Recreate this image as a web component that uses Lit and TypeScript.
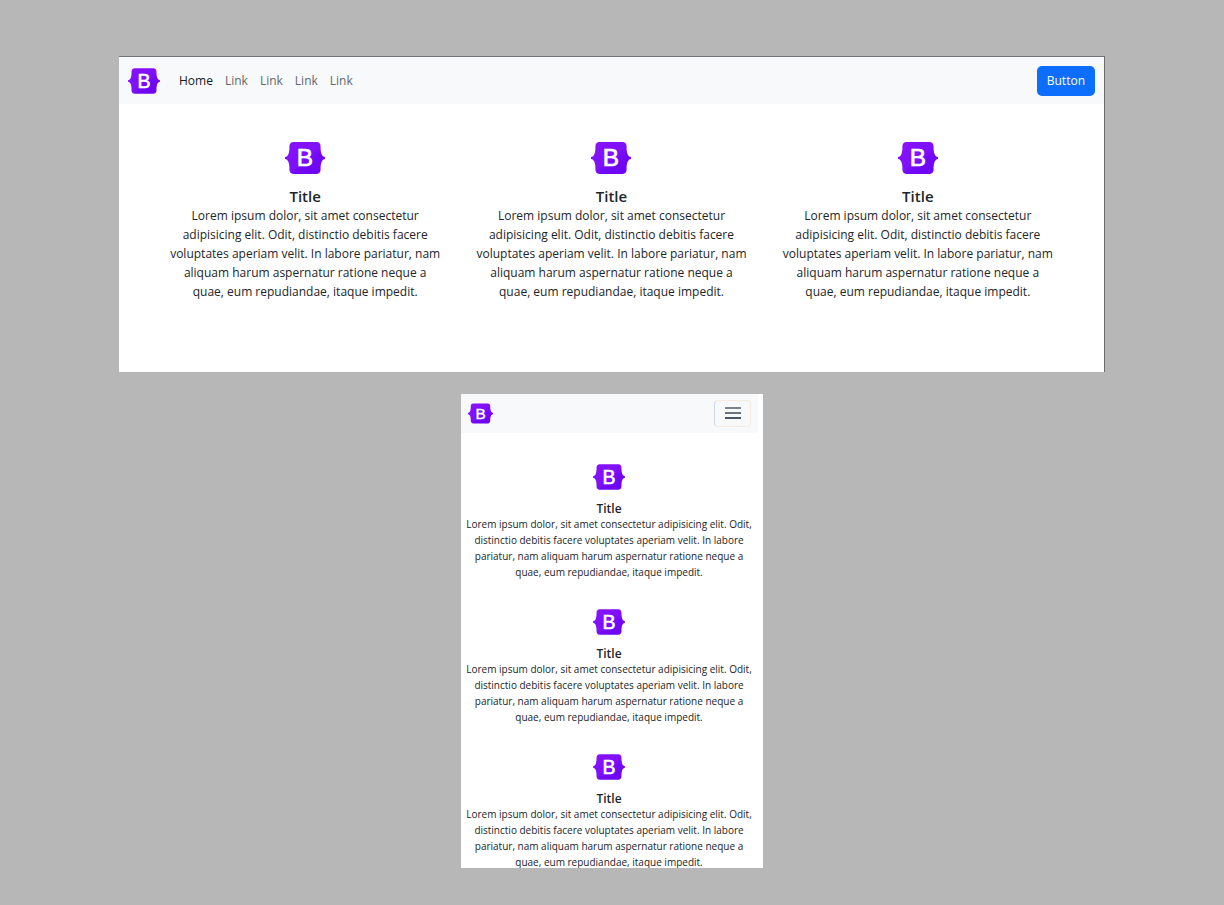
import { LitElement, html, css } from "lit";
import { customElement, property } from "lit/decorators.js";

const LOREM =
  "Lorem ipsum dolor, sit amet consectetur adipisicing elit. Odit, distinctio debitis facere voluptates aperiam velit. In labore pariatur, nam aliquam harum aspernatur ratione neque a quae, eum repudiandae, itaque impedit.";

const CARDS = [
  { title: "Title", text: LOREM },
  { title: "Title", text: LOREM },
  { title: "Title", text: LOREM },
];

const LINKS = ["Home", "Link", "Link", "Link", "Link"];

@customElement("brand-logo")
class BrandLogo extends LitElement {
  static styles = css`
    :host {
      display: block;
      flex: none;
    }
    .logo {
      display: block;
      width: 100%;
      height: 100%;
    }
    .letter {
      font: 72px "Liberation Sans", Arial, sans-serif;
      fill: #fff;
      stroke: #fff;
      stroke-width: 2;
    }
  `;

  render() {
    return html`
      <svg class="logo" viewBox="0 0 118 94" role="img" aria-label="Bootstrap">
        <defs>
          <linearGradient id="body" x1="0" y1="0" x2="1" y2="1">
            <stop offset="0" stop-color="#8a12fc" />
            <stop offset="0.5" stop-color="#7e10fb" />
            <stop offset="0.62" stop-color="#7209f5" />
            <stop offset="1" stop-color="#6a02f2" />
          </linearGradient>
        </defs>
        <path
          fill="url(#body)"
          d="M24.509 0c-6.733 0-11.715 5.893-11.492 12.284.214 6.14-.064 14.092-2.066 20.577C8.943 39.365 5.547 43.485 0 44.014v5.972c5.547.529 8.943 4.649 10.951 11.153 2.002 6.485 2.28 14.437 2.066 20.577C12.794 88.106 17.776 94 24.51 94H93.5c6.733 0 11.714-5.893 11.491-12.284-.214-6.14.064-14.092 2.066-20.577 2.009-6.504 5.396-10.624 10.943-11.153v-5.972c-5.547-.529-8.934-4.649-10.943-11.153-2.002-6.484-2.28-14.437-2.066-20.577C105.214 5.894 100.233 0 93.5 0H24.508z"
        />
        <text class="letter" x="59" y="72" text-anchor="middle">B</text>
      </svg>
    `;
  }
}

@customElement("feature-card")
class FeatureCard extends LitElement {
  @property() heading = "";
  @property() text = "";

  static styles = css`
    :host {
      display: flex;
      flex-direction: column;
      align-items: center;
      text-align: center;
    }
    .logo {
      width: 40px;
      height: 32px;
      margin-bottom: 13px;
    }
    .title {
      margin: 0;
      font-size: 15px;
      line-height: 19px;
      font-weight: 600;
    }
    .text {
      margin: 0;
      font-size: 12px;
      line-height: 19px;
    }
    :host([compact]) .logo {
      width: 32px;
      height: 26px;
      margin-bottom: 11px;
    }
    :host([compact]) .title {
      font-size: 12px;
      line-height: 15px;
    }
    :host([compact]) .text {
      font-size: 10px;
      line-height: 16px;
    }
  `;

  render() {
    return html`
      <brand-logo class="logo"></brand-logo>
      <h2 class="title">${this.heading}</h2>
      <p class="text">${this.text}</p>
    `;
  }
}

@customElement("app-root")
class AppRoot extends LitElement {
  static styles = css`
    :host {
      display: block;
      min-height: 100vh;
      box-sizing: border-box;
      padding: 56px 24px 37px;
      background: #b7b7b7;
      color: #212529;
      font-family: "Open Sans", "Noto Sans", sans-serif;
    }
    .previews {
      display: flex;
      flex-direction: column;
      align-items: center;
      gap: 22px;
    }
    .frame {
      width: 100%;
      box-sizing: border-box;
      background: #fff;
    }
    .wide {
      max-width: 986px;
      border-top: 1px solid #70757a;
      border-right: 1px solid #6c6c6c;
    }
    .narrow {
      max-width: 302px;
      max-height: 474px;
      overflow: hidden;
      padding-right: 5px;
    }
    .bar {
      display: flex;
      align-items: center;
      background: #f8f9fa;
    }
    .wide .bar {
      padding: 9px 9px 8px;
    }
    .narrow .bar {
      padding: 6px 7px;
      justify-content: space-between;
    }
    .wide .brand {
      width: 32px;
      height: 26px;
    }
    .narrow .brand {
      width: 25px;
      height: 21px;
    }
    .links {
      display: flex;
      flex: 1;
      gap: 12px;
      margin: 0 0 0 19px;
      padding: 0;
      list-style: none;
    }
    .link {
      display: block;
      font-size: 12px;
      line-height: 20px;
      color: #64676a;
      text-decoration: none;
    }
    .link.active {
      color: #17191c;
      font-weight: 500;
    }
    .action {
      padding: 5px 10px;
      border: 0;
      border-radius: 5px;
      background: #0d6efd;
      color: #fff;
      font: 500 12px/20px "Open Sans", "Noto Sans", sans-serif;
    }
    .toggler {
      display: grid;
      place-items: center;
      width: 37px;
      height: 27px;
      padding: 0;
      border: 1px solid #f6ebe0;
      border-left-color: #ccd5f2;
      border-radius: 4px;
      background: transparent;
    }
    .bars {
      width: 16px;
      height: 14px;
    }
    .columns {
      display: grid;
      grid-template-columns: repeat(3, 1fr);
      gap: 34px;
      padding: 38px 50px 71px;
    }
    .stack {
      display: flex;
      flex-direction: column;
      gap: 29px;
      padding: 31px 4px 0 3px;
    }
  `;

  render() {
    return html`
      <main class="previews">
        <section class="frame wide" aria-label="Desktop layout">
          <nav class="bar">
            <brand-logo class="brand"></brand-logo>
            <ul class="links">
              ${LINKS.map(
                (label, i) => html`<li><a class="link ${i === 0 ? "active" : ""}" href="#">${label}</a></li>`
              )}
            </ul>
            <button class="action" type="button">Button</button>
          </nav>
          <div class="columns">
            ${CARDS.map((c) => html`<feature-card .heading=${c.title} .text=${c.text}></feature-card>`)}
          </div>
        </section>
        <section class="frame narrow" aria-label="Mobile layout">
          <nav class="bar">
            <brand-logo class="brand"></brand-logo>
            <button class="toggler" type="button" aria-label="Toggle navigation">
              <svg class="bars" viewBox="0 0 16 14" fill="none" stroke-width="2">
                <path stroke="#7b828c" d="M0 1h16" />
                <path stroke="#6a727e" d="M0 6h16" />
                <path stroke="#4c5566" d="M0 11h16" />
              </svg>
            </button>
          </nav>
          <div class="stack">
            ${CARDS.map((c) => html`<feature-card compact .heading=${c.title} .text=${c.text}></feature-card>`)}
          </div>
        </section>
      </main>
    `;
  }
}
